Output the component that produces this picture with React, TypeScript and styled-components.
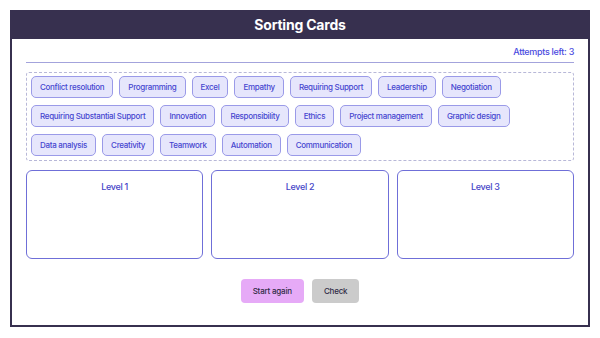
import React from 'react';
import styled, { createGlobalStyle } from 'styled-components';

const GlobalStyle = createGlobalStyle`
  html, body {
    margin: 0;
    padding: 0;
    background: #ffffff;
    font-family: Inter, "Liberation Sans", sans-serif;
  }
`;

const skills = [
  'Conflict resolution',
  'Programming',
  'Excel',
  'Empathy',
  'Requiring Support',
  'Leadership',
  'Negotiation',
  'Requiring Substantial Support',
  'Innovation',
  'Responsibility',
  'Ethics',
  'Project management',
  'Graphic design',
  'Data analysis',
  'Creativity',
  'Teamwork',
  'Automation',
  'Communication',
];

const levels = ['Level 1', 'Level 2', 'Level 3'];

const App: React.FC = () => {
  return (
    <>
      <GlobalStyle />
      <Frame>
        <Header>Sorting Cards</Header>
        <Body>
          <Attempts>Attempts left: 3</Attempts>
          <Pool>
            {skills.map((s) => (
              <Chip key={s}>{s}</Chip>
            ))}
          </Pool>
          <Levels>
            {levels.map((l) => (
              <LevelBox key={l}>
                <LevelTitle>{l}</LevelTitle>
              </LevelBox>
            ))}
          </Levels>
          <Actions>
            <Button $tone="#e6aaf7">Start again</Button>
            <Button $tone="#cbcbcb">Check</Button>
          </Actions>
        </Body>
      </Frame>
    </>
  );
};

export default App;

const Frame = styled.div`
  margin: 10px;
  width: 580px;
  height: 317px;
  box-sizing: border-box;
  border: 2px solid #37304f;
  border-top: none;
  display: flex;
  flex-direction: column;
`;

const Header = styled.div`
  height: 29px;
  margin: 0 -2px;
  background: #37304f;
  color: #ffffff;
  font-size: 14px;
  font-weight: 700;
  letter-spacing: -0.2px;
  display: flex;
  align-items: center;
  justify-content: center;
`;

const Body = styled.div`
  flex: 1;
  padding: 0 14px;
  display: flex;
  flex-direction: column;
`;

const Attempts = styled.div`
  height: 24px;
  box-sizing: border-box;
  border-bottom: 1px solid #a3a3dc;
  color: #4a4ae0;
  font-size: 9px;
  font-weight: 500;
  letter-spacing: -0.3px;
  text-align: right;
  padding-top: 7px;
`;

const Pool = styled.div`
  margin-top: 9px;
  border: 1px dashed #b8b8d8;
  border-radius: 3px;
  padding: 3px 4px 4px;
  display: flex;
  flex-wrap: wrap;
  gap: 7px 6px;
  align-content: flex-start;
`;

const Chip = styled.div`
  height: 22px;
  box-sizing: border-box;
  padding: 0 8px;
  border: 1px solid #9a9ae8;
  border-radius: 5px;
  background: #e6e6fc;
  color: #4646d0;
  font-size: 8px;
  font-weight: 500;
  letter-spacing: -0.3px;
  display: flex;
  align-items: center;
`;

const Levels = styled.div`
  margin-top: 9px;
  display: grid;
  grid-template-columns: repeat(3, 1fr);
  gap: 8px;
`;

const LevelBox = styled.div`
  height: 89px;
  box-sizing: border-box;
  border: 1px solid #6f6fd8;
  border-radius: 6px;
  padding-top: 10px;
`;

const LevelTitle = styled.div`
  color: #4545c8;
  font-size: 9px;
  font-weight: 500;
  letter-spacing: -0.3px;
  text-align: center;
`;

const Actions = styled.div`
  margin-top: 20px;
  display: flex;
  justify-content: center;
  gap: 8px;
`;

const Button = styled.button<{ $tone: string }>`
  height: 24px;
  padding: 0 12px;
  border: none;
  border-radius: 4px;
  background: ${(p) => p.$tone};
  color: #2f2a45;
  font-family: Inter, "Liberation Sans", sans-serif;
  font-size: 8px;
  font-weight: 500;
  letter-spacing: -0.2px;
`;
